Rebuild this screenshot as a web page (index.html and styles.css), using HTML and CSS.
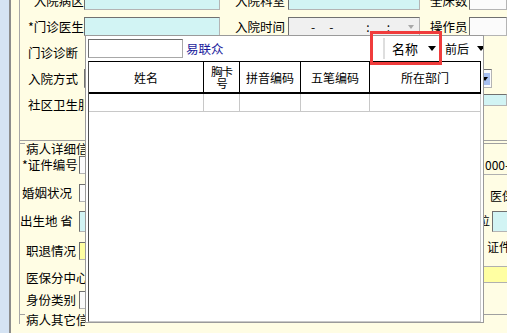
FILE: index.html
```html
<!DOCTYPE html>
<html lang="zh-CN">
<head>
    <meta charset="UTF-8">
    <title>入院登记</title>
    <link rel="stylesheet" href="styles.css">
</head>
<body>
    <div class="app">
        <div class="side"></div>
        <div class="frame">
            <div class="form">
                <div class="top">
                    <div class="row">
                        <span class="lbl">*入院病区</span>
                        <div class="fld cyan"></div>
                        <span class="lbl r">*入院科室</span>
                        <div class="fld cyan"></div>
                        <span class="lbl s">全床数</span>
                        <div class="fld"></div>
                    </div>
                    <div class="row">
                        <span class="lbl">*门诊医生</span>
                        <div class="fld cyan"></div>
                        <span class="lbl r">入院时间</span>
                        <div class="fld grey time">
                            <span>-</span><span>-</span><span>:</span><span>:</span><i class="caret light"></i>
                        </div>
                        <span class="lbl s">操作员</span>
                        <div class="fld"></div>
                    </div>
                    <div class="row">
                        <span class="lbl">门诊诊断</span>
                    </div>
                    <div class="row">
                        <span class="lbl">入院方式</span>
                        <div class="fld combo"><span class="dbtn"><i class="caret"></i></span></div>
                    </div>
                    <div class="row">
                        <span class="lbl">社区卫生服务</span>
                        <div class="fld cyan last"></div>
                    </div>
                </div>

                <div class="ghead"><span>病人详细信息</span></div>
                <div class="lower">
                    <div class="lrow">
                        <span class="lbl2">*证件编号</span>
                        <div class="fld"></div>
                        <div class="rt line">000-</div>
                    </div>
                    <div class="lrow">
                        <span class="lbl2">婚姻状况</span>
                        <div class="fld"></div>
                        <div class="rt"><span class="ind">医保</span></div>
                    </div>
                    <div class="lrow">
                        <span class="lbl2 tight">出生地 省</span>
                        <div class="fld cyan tall"></div>
                        <div class="rt"><span class="half">位</span><div class="fld cyan tall mini"></div></div>
                    </div>
                    <div class="lrow">
                        <span class="lbl2 in">职退情况</span>
                        <div class="fld yellow"></div>
                        <div class="rt"><span class="ind2">证件</span></div>
                    </div>
                    <div class="lrow">
                        <span class="lbl2 in">医保分中心</span>
                        <div></div>
                        <div class="rt"><div class="fld yellow strip"></div></div>
                    </div>
                    <div class="lrow">
                        <span class="lbl2 in">身份类别</span>
                        <div class="fld"></div>
                        <div class="rt"></div>
                    </div>
                </div>
                <div class="ghead two"><span>病人其它信息</span></div>
            </div>
        </div>
    </div>

    <!-- 病人检索下拉 -->
    <div class="popup">
        <div class="bar">
            <div class="search"></div>
            <span class="brand">易联众</span>
            <div class="pick">
                <div class="opt first">名称<i class="caret"></i></div>
                <div class="opt">前后<i class="caret"></i></div>
            </div>
        </div>
        <div class="grid">
            <div class="ghd">
                <div class="cell">姓名</div>
                <div class="cell narrow">胸卡号</div>
                <div class="cell">拼音编码</div>
                <div class="cell">五笔编码</div>
                <div class="cell">所在部门</div>
            </div>
            <div class="grow">
                <div class="cell"></div>
                <div class="cell"></div>
                <div class="cell"></div>
                <div class="cell"></div>
                <div class="cell"></div>
            </div>
            <div class="gbody"></div>
        </div>
    </div>
    <div class="mark"></div>
</body>
</html>
```

FILE: styles.css
```css
* {
    margin: 0;
    padding: 0;
    box-sizing: border-box;
}

body {
    font-family: "Noto Sans CJK SC", sans-serif;
    font-size: 12.5px;
    color: #000;
    background: #fffde4;
    width: 507px;
    height: 333px;
    overflow: hidden;
    position: relative;
}

.app {
    display: flex;
    height: 333px;
}

.side {
    width: 11px;
    background: #d5e3f3;
    border-right: 2px solid #8c8c8c;
}

.frame {
    flex: 1;
    padding-left: 8px;
    overflow: hidden;
}

.form {
    border-left: 1px solid #a8a8a8;
    height: 100%;
}

/* form fields */
.fld {
    height: 19px;
    background: #fbfbfb;
    border: 1px solid #b4b4b4;
    border-top-color: #707070;
    border-left-color: #707070;
}

.fld.cyan { background: #d2f4f4; }
.fld.grey { background: #f0f0f0; }
.fld.yellow { background: #ffffa2; }

/* top section */
.top {
    margin-top: -9px;
    padding-bottom: 19px;
    border-bottom: 1px solid #a0a0a0;
}

.row {
    display: grid;
    grid-template-columns: 64px 136px 68px 132px 49px 1fr;
    height: 19px;
    margin-bottom: 7px;
    align-items: center;
    white-space: nowrap;
}

.lbl {
    padding-left: 8px;
    overflow: hidden;
}

.lbl.r {
    text-align: right;
    padding-right: 3px;
}

.lbl.s {
    padding-left: 10px;
}

.time {
    display: flex;
    align-items: center;
    font-size: 12px;
    line-height: 17px;
}

.time span:nth-child(1) { margin-left: 22px; }
.time span:nth-child(2) { margin-left: 14px; }
.time span:nth-child(3) { margin-left: 33px; }
.time span:nth-child(4) { margin-left: 17px; }

.caret {
    display: inline-block;
    width: 0;
    height: 0;
    border-left: 4.5px solid transparent;
    border-right: 4.5px solid transparent;
    border-top: 5px solid #000;
}

.caret.light {
    margin-left: 18px;
    border-left-width: 3.5px;
    border-right-width: 3.5px;
    border-top: 4px solid #a8a8a8;
}

.fld.combo {
    grid-column: 2 / 7;
    margin-right: 15px;
    display: flex;
    justify-content: flex-end;
    align-items: center;
    padding-right: 1px;
}

.dbtn {
    width: 10px;
    height: 12px;
    background: #a6bff0;
    display: flex;
    align-items: center;
    justify-content: center;
}

.dbtn .caret {
    border-left-width: 3.5px;
    border-right-width: 3.5px;
    border-top-width: 4px;
}

.fld.last {
    grid-column: 6;
    margin-top: -10px;
    height: 12px;
}

/* group boxes */
.ghead {
    display: flex;
    height: 13px;
    margin-top: 1px;
    line-height: 14px;
    white-space: nowrap;
}

.ghead::before {
    content: "";
    width: 5px;
    border-top: 1px solid #a0a0a0;
    margin-top: 1px;
}

.ghead span {
    padding: 0 1px;
    width: 60px;
    overflow: hidden;
}

.ghead::after {
    content: "";
    flex: 1;
    border-top: 1px solid #a0a0a0;
    margin-top: 1px;
}

.ghead.two {
    margin-top: 0;
    height: 21px;
}

.lower {
    display: grid;
    grid-template-rows: 29px 28px 30px 27px 22px 22px;
}

.lrow {
    display: grid;
    grid-template-columns: 59px 405px 1fr;
    align-items: start;
    white-space: nowrap;
    line-height: 18px;
}

.lrow:first-child {
    padding-top: 1px;
}

.lrow .fld {
    height: 18px;
}

.lbl2 {
    padding-left: 2px;
}

.lbl2.tight { padding-left: 0; }
.lbl2.in { padding-left: 6px; }

.lrow .fld.tall {
    height: 21px;
    margin-top: -1px;
}

.rt {
    display: flex;
    align-items: flex-start;
    font-size: 12px;
}

.rt.line {
    height: 19px;
    border-bottom: 1px solid #b0b0b0;
    padding-left: 1px;
}

.rt .ind { padding-left: 6px; margin-top: 3px; }
.rt .ind2 { padding-left: 3px; margin-top: -4px; }

.rt .half {
    margin-left: -6px;
}

.rt .fld.mini {
    margin-left: 2px;
    width: 20px;
}

.rt .fld.strip {
    width: 100%;
    height: 17px;
    margin-top: -3px;
    border: none;
    border-top: 1px solid #b0b0b0;
    border-bottom: 1px solid #b0b0b0;
}

/* popup list */
.popup {
    position: absolute;
    left: 85px;
    top: 35px;
    width: 399px;
    height: 288px;
    background: #fff;
    border: 1px solid #9a9a9a;
    overflow: hidden;
    display: flex;
    flex-direction: column;
}

.bar {
    height: 25px;
    display: flex;
    align-items: center;
    flex-shrink: 0;
}

.search {
    width: 95px;
    height: 19px;
    margin-left: 2px;
    border: 1px solid #a8a8a8;
    border-top-color: #6e6e6e;
    border-left-color: #6e6e6e;
}

.brand {
    margin-left: 3px;
    color: #1c1c9c;
}

.pick {
    margin-left: auto;
    width: 100px;
    flex-shrink: 0;
    display: flex;
    height: 21px;
    overflow: hidden;
    white-space: nowrap;
}

.opt {
    display: flex;
    align-items: center;
    flex-shrink: 0;
    font-size: 13px;
}

.opt.first {
    width: 60px;
    padding-left: 7px;
    border-left: 2px solid #dedede;
}

.opt.first .caret { margin-left: 10px; }

.opt + .opt {
    padding-left: 2px;
    font-size: 12px;
}

.opt + .opt .caret { margin-left: 8px; }

.grid {
    flex: 1;
    width: 393px;
    margin-left: 2px;
    border-left: 1px solid #505050;
    border-top: 1px solid #000;
    border-bottom: 1px solid #c8c8c8;
    display: flex;
    flex-direction: column;
    font-size: 12px;
}

.ghd,
.grow {
    display: grid;
    grid-template-columns: 115px 36px 61px 69px 111px;
}

.ghd {
    height: 32px;
    border-bottom: 2px solid #000;
}

.ghd .cell {
    border-right: 1px solid #000;
    display: flex;
    align-items: center;
    justify-content: center;
    text-align: center;
}

.ghd .cell.narrow {
    padding: 0 5px;
    line-height: 12px;
    font-size: 11.5px;
    letter-spacing: -1px;
}

.grow {
    height: 18px;
    border-bottom: 1px solid #c8c8c8;
}

.grow .cell {
    border-right: 1px solid #c8c8c8;
}

.gbody {
    flex: 1;
    border-right: 1px solid #c8c8c8;
}

/* annotation box */
.mark {
    position: absolute;
    left: 370px;
    top: 31px;
    width: 72px;
    height: 34px;
    border: 3px solid #f03c3c;
}
```
